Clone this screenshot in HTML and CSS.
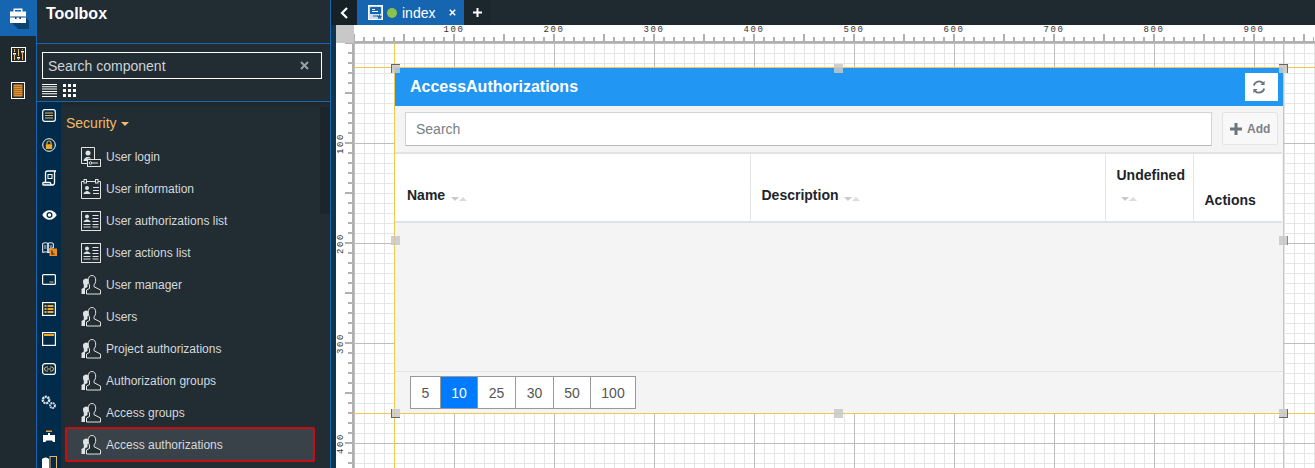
FILE: index.html
```html
<!DOCTYPE html>
<html lang="en">
<head>
<meta charset="utf-8">
<title>AccessAuthorizations</title>
<link rel="stylesheet" href="styles.css">
</head>
<body>
<svg class="defs" width="0" height="0" aria-hidden="true">
  <symbol id="people" viewBox="0 0 20 20">
    <path d="M11 .5c2.500 0 3.700 2 3.700 4.500 0 2.300-.8 4-1.700 5v1.700l6.500 3.300v4H5.500v-4l3-1.500v-3.500C7.700 9 7.200 7.300 7.200 5 7.200 2.500 8.500.5 11 .5z" fill="#212c33" stroke="#dfe3e5" stroke-width="1"/>
    <path d="M5.500 3.500c1.300 0 2 1 2 2.500 0 1.500-.4 2.800-1 3.600V12L4 13.500V19H.5v-5l2.300-1.500V9.600C2.200 8.800 2 7.500 2 6.200 2 4.600 3.800 3.500 5.500 3.500z" fill="#dfe3e5"/>
  </symbol>
  <symbol id="card" viewBox="0 0 20 20">
    <rect x=".5" y=".5" width="19" height="19" fill="none" stroke="#dfe3e5"/>
    <circle cx="6" cy="5.500" r="2" fill="#dfe3e5"/>
    <path d="M2.500 11c0-1.500 2-1.500 2.500-2.500h2c.5 1 2.500 1 2.500 2.500zM2.500 13h7v1h-7zM2.500 15.500h7v1h-7zM11.500 4h6v1h-6zM11.500 7h6v1h-6zM11.500 10h6v1h-6zM11.500 13h6v1h-6zM11.500 15.500h6v1h-6z" fill="#dfe3e5"/>
  </symbol>
</svg>

<div class="app">
  <nav class="rail">
    <div class="rail-item active">
      <svg width="24" height="24" viewBox="0 0 24 24"><path d="M6 10h12l5 5v8H12l-6-6z" fill="#0c4170"/><path d="M7.500 5.500V2.500h9v3H20v5H4v-5zM9 5.500h6V4H9zM4 11.500h5V13h1.500v-1.500h3V13H15v-1.500h5V17H4z" fill="#fff"/></svg>
    </div>
    <div class="rail-item">
      <svg width="15" height="15" viewBox="0 0 15 15"><rect x=".5" y=".5" width="14" height="14" fill="#1f2a30" stroke="#fff"/><path d="M3.500 2v3M3.500 8v5M7.500 2v7M7.500 12v1M11.500 2v1M11.500 6v7" stroke="#f0b45c"/><path d="M2 6h3v1.500H2zM6 10h3v1.500H6zM10 4h3v1.500h-3z" fill="#fff"/></svg>
    </div>
    <div class="rail-item">
      <svg width="14" height="17" viewBox="0 0 14 17"><rect x=".5" y=".5" width="13" height="16" fill="#1f2a30" stroke="#fff"/><path d="M2.500 2.500h9v12h-9z" fill="#e8932f"/><path d="M2.500 4.500h9M2.500 6.500h9M2.500 8.500h9M2.500 10.500h9M2.500 12.500h9" stroke="#8a5a22" stroke-width=".7"/></svg>
    </div>
  </nav>

  <aside class="toolbox">
    <div class="tb-head">Toolbox</div>
    <div class="tb-search">
      <div class="search-box">
        <span>Search component</span>
        <svg width="9" height="9" viewBox="0 0 9 9"><path d="M1 1l7 7M8 1L1 8" stroke="#9aa1a6" stroke-width="2"/></svg>
      </div>
      <div class="views">
        <svg width="15" height="13" viewBox="0 0 15 13"><path d="M0 0h15v1H0zM0 2.300h15v1H0zM0 4.600h15v1H0zM0 7h15v1H0zM0 9.300h15v1H0zM0 12h15v1H0z" fill="#fff"/></svg>
        <svg width="14" height="13" viewBox="0 0 14 13"><path d="M0 0h3v3H0zM5 0h3v3H5zM10 0h3v3h-3zM0 5h3v3H0zM5 5h3v3H5zM10 5h3v3h-3zM0 10h3v3H0zM5 10h3v3H5zM10 10h3v3h-3z" fill="#fff"/></svg>
      </div>
    </div>
    <div class="tb-body">
      <div class="cats">
        <svg width="14" height="13" viewBox="0 0 14 13"><rect x=".7" y=".7" width="12.600" height="11.600" rx="2" fill="none" stroke="#fff" stroke-width="1.200"/><path d="M3 3.500h8v1H3zM3 6h8v1H3zM3 8.500h8v1H3z" fill="#f0b45c"/></svg>
        <svg width="14" height="14" viewBox="0 0 14 14"><circle cx="7" cy="7" r="6.300" fill="none" stroke="#fff"/><rect x="3.800" y="6.300" width="6.400" height="4.700" rx=".6" fill="#f5a623"/><path d="M5 6.500V5a2 2 0 0 1 4 0v1.500" fill="none" stroke="#f5a623" stroke-width="1.200"/></svg>
        <svg width="15" height="16" viewBox="0 0 15 16"><path d="M3.500 12.500V3c0-1.200.8-2 2-2h8.500c-1 0-1.500.8-1.500 2v9.500c0 1.500-1 2.500-2 2.500H1.500C.5 15 .5 12.500 1.500 12.500h6.500c.5 0 .5 2.500 2 2.500" fill="none" stroke="#fff" stroke-width="1.300"/><rect x="6" y="4.500" width="4" height="4" fill="none" stroke="#fff"/></svg>
        <svg width="15" height="10" viewBox="0 0 15 10"><path d="M.3 5C2 1.800 4.700.3 7.500.3S13 1.800 14.700 5c-1.700 3.200-4.400 4.700-7.200 4.700S2 8.200.3 5z" fill="#fff"/><circle cx="7.500" cy="5" r="3" fill="#012b4a"/><circle cx="7.500" cy="5" r="1.700" fill="#fff"/></svg>
        <svg width="15" height="15" viewBox="0 0 15 15"><path d="M.7 2.500C2.500 1.500 4.500 1.500 6 2.500v9c-1.500-.8-3.500-.8-5.300 0zM6 2.500c1.500-1 3.500-1 5.300 0V7H8v4.500H6z" fill="#012b4a" stroke="#fff"/><path d="M2 5h2.500M2 7h2.500M7.500 5h2.500" stroke="#fff" stroke-width=".8"/><rect x="7.500" y="7.500" width="7.500" height="7.500" fill="#f08c1a"/><path d="M10 9.500v3.500h2.500" fill="none" stroke="#1f2a30" stroke-width="1.200"/></svg>
        <svg width="14" height="11" viewBox="0 0 14 11"><rect x=".6" y=".6" width="12.800" height="9.800" rx="1" fill="none" stroke="#fff" stroke-width="1.200"/><path d="M7.500 7.500h4v1h-4z" fill="#f0b45c"/></svg>
        <svg width="14" height="14" viewBox="0 0 14 14"><rect x=".6" y=".6" width="12.800" height="12.800" fill="none" stroke="#fff" stroke-width="1.200"/><path d="M2.500 3h2v2h-2zM2.500 6h2v2h-2zM2.500 9h2v2h-2zM5.500 3h6v2h-6zM5.500 6h6v2h-6zM5.500 9h6v2h-6z" fill="#f5a623"/></svg>
        <svg width="14" height="14" viewBox="0 0 14 14"><rect x=".6" y=".6" width="12.800" height="12.800" fill="none" stroke="#fff" stroke-width="1.200"/><path d="M2 2h10v2H2z" fill="#f5a623"/></svg>
        <svg width="14" height="12" viewBox="0 0 14 12"><rect x=".6" y=".6" width="12.800" height="10.800" rx="2.500" fill="none" stroke="#fff" stroke-width="1.200"/><path d="M6 4H4.500a2 2 0 0 0 0 4H6M8 4h1.500a2 2 0 0 1 0 4H8M5 6h4" fill="none" stroke="#f0b45c"/></svg>
        <svg width="16" height="15" viewBox="0 0 16 15"><circle cx="5" cy="5" r="3.200" fill="none" stroke="#dfe3e5" stroke-width="2.400" stroke-dasharray="2 .7"/><circle cx="11.500" cy="10.500" r="2.400" fill="none" stroke="#dfe3e5" stroke-width="2" stroke-dasharray="1.500 .6"/></svg>
        <svg width="15" height="12" viewBox="0 0 15 12"><path d="M4 .5h6V2H4z" fill="#f0a040"/><path d="M6 3h2v2h5v7h-2c-.5-1.500-1-1.500-2-1.500H5.500c-1 0-1.500 0-2 1.500H1V5h5z" fill="#fff"/></svg>
        <svg width="15" height="15" viewBox="0 0 15 15"><path d="M0 3c3-2 5-2 7 0v12H0z" fill="#fff"/><rect x="8" y=".5" width="6.500" height="14" fill="#012b4a" stroke="#f0b45c"/></svg>
      </div>
      <div class="list">
        <div class="group">Security <span class="caret"></span></div>
        <ul class="items">
          <li class="item">
            <svg class="ico" width="20" height="20" viewBox="0 0 20 20"><path d="M13.500 12.500V.5H.5v16h6" fill="none" stroke="#dfe3e5"/><circle cx="7" cy="6" r="2.500" fill="#dfe3e5"/><path d="M2.500 14c0-2.500 2-3 3-4h3l1.500 1.500H6.500V14z" fill="#dfe3e5"/><rect x="6.500" y="12.500" width="13" height="7" fill="#212c33" stroke="#dfe3e5"/><circle cx="9.500" cy="16" r="1.300" fill="none" stroke="#dfe3e5"/><path d="M11 15.500h6v1h-6z" fill="#dfe3e5"/></svg>
            User login
          </li>
          <li class="item">
            <svg class="ico" width="20" height="20" viewBox="0 0 20 20"><path d="M.5 2.500h19v17H.5z" fill="none" stroke="#dfe3e5"/><rect x="3" y=".5" width="2.500" height="3.500" fill="#212c33" stroke="#dfe3e5"/><rect x="14.500" y=".5" width="2.500" height="3.500" fill="#212c33" stroke="#dfe3e5"/><circle cx="6" cy="9" r="2" fill="#dfe3e5"/><path d="M2.500 15c0-2 2-2 3-3h1c1 1 3 1 3 3zM12 8h6v1h-6zM12 11h6v1h-6zM12 14h6v1h-6z" fill="#dfe3e5"/></svg>
            User information
          </li>
          <li class="item"><svg class="ico" width="20" height="20"><use href="#card"/></svg>User authorizations list</li>
          <li class="item"><svg class="ico" width="20" height="20"><use href="#card"/></svg>User actions list</li>
          <li class="item"><svg class="ico" width="20" height="20"><use href="#people"/></svg>User manager</li>
          <li class="item"><svg class="ico" width="20" height="20"><use href="#people"/></svg>Users</li>
          <li class="item"><svg class="ico" width="20" height="20"><use href="#people"/></svg>Project authorizations</li>
          <li class="item"><svg class="ico" width="20" height="20"><use href="#people"/></svg>Authorization groups</li>
          <li class="item"><svg class="ico" width="20" height="20"><use href="#people"/></svg>Access groups</li>
          <li class="item selected"><svg class="ico" width="20" height="20"><use href="#people"/></svg>Access authorizations</li>
        </ul>
        <div class="scroll"></div>
      </div>
    </div>
  </aside>

  <main class="main">
    <div class="tabs">
      <div class="tab-back">
        <svg width="9" height="12" viewBox="0 0 9 12"><path d="M7 1L2 6l5 5" fill="none" stroke="#fff" stroke-width="2.200"/></svg>
      </div>
      <div class="tab">
        <svg width="15" height="15" viewBox="0 0 15 15"><rect x=".5" y=".5" width="14" height="14" fill="#cfe0ee" stroke="#fff"/><path d="M2.500 2.500h10v6h-10zM5 11h5" fill="#1565b0" stroke="#1565b0"/><path d="M4 4h3v1H4zM4 6h6v1H4z" fill="#fff"/><path d="M11.500 9l.8 1.800 1.900.2-1.400 1.300.4 1.900-1.700-1-1.700 1 .4-1.900L8.800 11l1.900-.2z" fill="#1565b0"/></svg>
        <span class="dot"></span>
        <span class="tab-name">index</span>
        <svg class="tab-close" width="7" height="7" viewBox="0 0 7 7"><path d="M.8.800l5.400 5.400M6.200.800L.8 6.200" stroke="#fff" stroke-width="1.500"/></svg>
      </div>
      <div class="tab-add">
        <svg width="9" height="9" viewBox="0 0 9 9"><path d="M3.500 0h2v3.500H9v2H5.500V9h-2V5.500H0v-2h3.500z" fill="#fff"/></svg>
      </div>
    </div>

    <div class="workspace">
      <div class="corner"></div>
      <div class="hruler">
        <span>100</span><span>200</span><span>300</span><span>400</span><span>500</span><span>600</span><span>700</span><span>800</span><span>900</span>
      </div>
      <div class="vruler">
        <span>100</span><span>200</span><span>300</span><span>400</span>
      </div>
      <div class="canvas">
        <div class="guides-v"></div>
        <div class="guides-h"></div>

        <section class="widget">
          <header class="w-head">
            <h2>AccessAuthorizations</h2>
            <button class="refresh" type="button">
              <svg width="14" height="14" viewBox="0 0 14 14"><path d="M1.800 5.500A5.300 5.300 0 0 1 11 3.200M12.200 8.500A5.300 5.300 0 0 1 3 10.800" fill="none" stroke="#6c757d" stroke-width="1.800"/><path d="M12.600.8v4.200H8.400zM1.400 13.200V9h4.200z" fill="#6c757d"/></svg>
            </button>
          </header>
          <div class="w-tools">
            <div class="w-search">Search</div>
            <button class="w-add" type="button">
              <svg width="12" height="12" viewBox="0 0 12 12"><path d="M4.500 0h3v4.500H12v3H7.500V12h-3V7.500H0v-3h4.500z" fill="#6c757d"/></svg>
              Add
            </button>
          </div>
          <table class="w-table">
            <colgroup><col class="c1"><col class="c2"><col class="c3"><col class="c4"></colgroup>
            <thead>
              <tr>
                <th class="mid first">Name <span class="sort"><b class="dn"></b><b class="up"></b></span></th>
                <th class="mid">Description <span class="sort"><b class="dn"></b><b class="up"></b></span></th>
                <th class="undefined">Undefined<br><span class="sort"><b class="dn"></b><b class="up"></b></span></th>
                <th class="bot">Actions</th>
              </tr>
            </thead>
          </table>
          <div class="w-empty"></div>
          <footer class="w-foot">
            <div class="pager">
              <a class="p5">5</a><a class="on p10">10</a><a class="p25">25</a><a class="p25">30</a><a class="p50">50</a><a class="p100">100</a>
            </div>
          </footer>
          <i class="handle h-tl"></i><i class="handle h-tc"></i><i class="handle h-tr"></i>
          <i class="handle h-ml"></i><i class="handle h-mr"></i>
          <i class="handle h-bl"></i><i class="handle h-bc"></i><i class="handle h-br"></i>
        </section>
      </div>
    </div>
  </main>
</div>
</body>
</html>
```

FILE: styles.css
```css
* { box-sizing: border-box; }
html, body { margin: 0; height: 468px; overflow: hidden; }
body { font-family: "Liberation Sans", Arial, sans-serif; background: #212c33; color: #dfe3e5; }
.defs { position: absolute; }
.app { display: flex; height: 468px; }

/* left rail */
.rail { width: 36px; flex: none; background: #1f2a30; }
.rail-item { height: 36px; display: flex; align-items: center; justify-content: center; }
.rail-item.active { background: #1565b0; }

/* toolbox */
.toolbox { width: 295px; flex: none; display: flex; flex-direction: column; background: #212c33; border-left: 1px solid #1a66ad; border-right: 1px solid #1a66ad; }
.tb-head { height: 44px; padding: 5px 0 0 9px; font-size: 16px; line-height: 17px; font-weight: bold; color: #fff; border-bottom: 1px solid #1a66ad; }
.tb-search { height: 58px; padding: 8px 8px 0 5px; border-bottom: 1px solid #1a66ad; }
.search-box { height: 27px; padding: 0 12px 0 5px; display: flex; align-items: center; justify-content: space-between; border: 1px solid #fff; font-size: 14px; color: #cfd3d6; }
.views { display: flex; gap: 6px; margin-top: 5px; }
.tb-body { flex: 1; min-height: 0; display: flex; overflow: hidden; }
.cats { width: 24px; flex: none; background: #012b4a; display: grid; justify-items: center; align-items: center; grid-template-rows: 26px 34px 32px 42px 24px 38px 22px 38px 22px 44px 24px 30px; }
.list { flex: 1; position: relative; padding: 7px 0 0 4px; background: linear-gradient(#1c262c, #212c33 6px); }
.group { height: 28px; padding-left: 1px; font-size: 14px; line-height: 28px; color: #f0bb6a; }
.caret { display: inline-block; vertical-align: 2px; margin-left: 1px; border: 4px solid transparent; border-top-color: #f0bb6a; border-bottom: 0; }
.items { list-style: none; margin: 0; padding: 4px 0 0; width: 250px; }
.item { height: 32px; display: flex; align-items: center; gap: 5px; padding-left: 16px; font-size: 12px; color: #d5d9dc; }
.item .ico { flex: none; }
.item.selected { height: 35px; margin-top: -2px; padding-left: 14px; background: #3a4249; border: 2px solid #c40f13; border-radius: 2px; }
.scroll { position: absolute; top: 5px; right: 0; width: 10px; height: 107px; background: #1b252b; }

/* main */
.main { flex: 1; min-width: 0; display: flex; flex-direction: column; }
.tabs { height: 25px; flex: none; display: flex; background: #1f2a30; }
.tab-back { width: 26px; display: flex; align-items: center; justify-content: center; background: #152027; }
.tab { width: 107px; display: flex; align-items: center; padding-left: 11px; background: #1565b0; color: #fff; }
.dot { width: 10px; height: 10px; margin-left: 4px; border-radius: 50%; background: #8bc34a; }
.tab-name { margin-left: 5px; font-size: 14px; }
.tab-close { margin-left: 14px; }
.tab-add { width: 26px; display: flex; align-items: center; justify-content: center; background: #1c272d; }

.workspace { flex: 1; min-height: 0; display: grid; grid-template-columns: 18px 1fr; grid-template-rows: 18px 1fr; margin-left: 5px; background: #fff; position: relative; }
.workspace::before { content: ""; position: absolute; left: -5px; top: 0; bottom: 0; width: 5px; background: #0f3550; }
.corner { background: #c8c8c8; }
.hruler {
  display: flex; padding-left: 50px; overflow: hidden;
  background-color: #fff;
  background-image:
    linear-gradient(#b0b0b0, #b0b0b0),
    repeating-linear-gradient(to right, #b0b0b0 0 2px, transparent 2px 10px),
    repeating-linear-gradient(to right, #b0b0b0 0 2px, transparent 2px 50px);
  background-size: 100% 2px, 100% 6px, 100% 9px;
  background-position: 0 100%, -1px 100%, -1px 100%;
  background-repeat: no-repeat;
}
.hruler span { flex: none; width: 100px; text-align: center; font-family: "Liberation Mono", monospace; font-size: 9px; line-height: 9px; letter-spacing: 1.6px; padding-top: 1px; color: #333; }
.vruler {
  display: flex; flex-direction: column; padding-top: 50px; overflow: hidden;
  background-color: #fff;
  background-image:
    linear-gradient(#b0b0b0, #b0b0b0),
    repeating-linear-gradient(#b0b0b0 0 2px, transparent 2px 10px),
    repeating-linear-gradient(#b0b0b0 0 2px, transparent 2px 50px);
  background-size: 2px 100%, 6px 100%, 9px 100%;
  background-position: 100% 0, 100% -1px, 100% -1px;
  background-repeat: no-repeat;
}
.vruler span { flex: none; height: 100px; writing-mode: vertical-rl; transform: rotate(180deg); text-align: center; font-family: "Liberation Mono", monospace; font-size: 9px; line-height: 9px; letter-spacing: 1.6px; padding-right: 1px; color: #333; width: 10px; }
.canvas {
  position: relative; overflow: hidden; padding: 25px 0 0 41px;
  background-color: #fff;
  background-image:
    linear-gradient(to right, #bdbdbd 1px, transparent 1px),
    linear-gradient(#bdbdbd 1px, transparent 1px),
    linear-gradient(to right, #e6e6e6 1px, transparent 1px),
    linear-gradient(#e6e6e6 1px, transparent 1px);
  background-size: 100px 100px, 100px 100px, 10px 10px, 10px 10px;
}
.guides-v { position: absolute; z-index: 1; top: 0; bottom: 0; left: 40px; width: 890px; border-left: 1px solid #f0c84e; border-right: 1px solid #f0c84e; pointer-events: none; }
.guides-h { position: absolute; z-index: 1; left: 0; right: 0; top: 24px; height: 347px; border-top: 1px solid #f0c84e; border-bottom: 1px solid #f0c84e; pointer-events: none; }

/* widget */
.widget { position: relative; width: 888px; height: 345px; display: flex; flex-direction: column; background: #f4f4f4; }
.w-head { height: 38px; flex: none; display: flex; align-items: center; justify-content: space-between; padding: 0 5px 0 15px; background: #2196f3; }
.w-head h2 { margin: 0; font-size: 16px; font-weight: bold; color: #fff; }
.refresh { width: 33px; height: 28px; padding: 0 5px 0 0; border: 0; display: flex; align-items: center; justify-content: center; background: #fff; }
.w-tools { height: 46px; flex: none; display: flex; gap: 10px; padding: 6px 5px 0 10px; }
.w-search { width: 807px; height: 34px; padding-left: 10px; font-size: 14px; line-height: 33px; color: #777e85; background: #fff; border: 1px solid #ced4da; border-bottom-color: #bbb; }
.w-add { width: 56px; height: 33px; padding: 0 0 0 7px; display: flex; align-items: center; gap: 5px; font: bold 12px "Liberation Sans", Arial, sans-serif; color: #7b8288; background: #f8f8f8; border: 1px solid #e4e4e4; border-radius: 2px; }
.w-table { flex: none; width: 887px; height: 71px; table-layout: fixed; border-collapse: collapse; background: #fff; border-top: 2px solid #e2e2e2; border-bottom: 2px solid #dee2e6; }
.c1, .c2 { width: 355px; }
.c3 { width: 88px; }
.c4 { width: 89px; }
.w-table th { padding: 0 11px; text-align: left; font-size: 14px; line-height: 20px; font-weight: bold; color: #212529; border-right: 1px solid #e6e6e6; }
.w-table th:last-child { border-right: 0; }
.w-table .mid { vertical-align: middle; padding-top: 14px; }
.w-table .first { padding-left: 12px; }
.w-table .bot { vertical-align: bottom; padding-bottom: 11px; }
.w-table .undefined { vertical-align: top; padding-top: 11px; }
.w-table .undefined .sort { margin: 8px 0 0 4px; }
.sort { display: inline-flex; gap: 0; margin-left: 2px; vertical-align: -1px; }
.sort b { width: 0; height: 0; border: 4px solid transparent; }
.sort .dn { border-top: 4px solid #c9c9c9; border-bottom: 0; margin-top: 1px; }
.sort .up { border-bottom: 4px solid #dcdcdc; border-top: 0; margin-top: 1px; }
.w-empty { flex: 1; min-height: 0; border-bottom: 1px solid #e4e4e4; }
.w-foot { height: 41px; flex: none; padding: 4px 0 0 15px; }
.pager { display: inline-flex; height: 33px; background: #fff; border: 1px solid #999; }
.pager a { display: flex; align-items: center; justify-content: center; font-size: 14px; color: #555; border-right: 1px solid #999; }
.pager a:last-child { border-right: 0; }
.pager .on { background: #007bff; color: #fff; font-weight: normal; border-right-color: #5aa0e8; }
.p5 { width: 30px; }
.p10 { width: 37px; }
.p25 { width: 38px; }
.p50 { width: 37px; }
.p100 { width: 44px; }

.handle { position: absolute; z-index: 2; width: 9px; height: 9px; background: rgba(200,200,200,.85); }
.h-tl { left: -4px; top: -4px; border-left: 1px solid #666; border-top: 1px solid #666; }
.h-tc { left: 439px; top: -4px; }
.h-tr { right: -5px; top: -4px; border-right: 1px solid #666; border-top: 1px solid #666; }
.h-ml { left: -4px; top: 168px; }
.h-mr { right: -5px; top: 168px; border-right: 1px solid #888; }
.h-bl { left: -4px; bottom: -5px; border-left: 1px solid #666; border-bottom: 1px solid #666; }
.h-bc { left: 439px; bottom: -5px; }
.h-br { right: -5px; bottom: -5px; border-right: 1px solid #666; border-bottom: 1px solid #666; }
```
